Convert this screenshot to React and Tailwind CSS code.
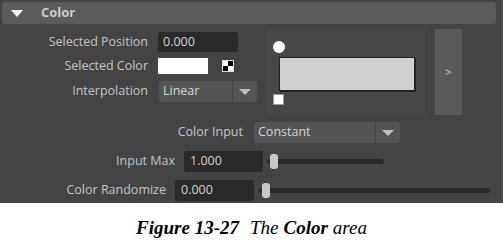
import React from 'react';

const labelCls = 'text-[12.5px] text-[#c6c6c6] text-right whitespace-nowrap';

const Field = ({ value, width }) => (
    <div className={`${width} h-[21px] bg-[#2a2a2a] rounded-[2px] flex items-center pl-[6px] text-[12.5px] text-[#d2d2d2]`}>
        {value}
    </div>
);

const Dropdown = ({ value, width }) => (
    <div className="flex h-[21px]">
        <div className={`${width} bg-[#545454] rounded-l-[2px] flex items-center pl-[4px] text-[12.5px] text-[#d6d6d6]`}>{value}</div>
        <div className="w-[24px] ml-[1px] bg-[#545454] rounded-r-[2px] flex items-center justify-center">
            <div className="w-0 h-0 border-l-[6px] border-r-[6px] border-t-[6px] border-l-transparent border-r-transparent border-t-[#bdbdbd]" />
        </div>
    </div>
);

const Slider = ({ width }) => (
    <div className={`${width} relative h-[17px] flex items-center`}>
        <div className="w-full h-[5px] bg-[#2b2b2b] rounded-full" />
        <div className="absolute left-[3px] top-[1px] w-[8px] h-[15px] bg-[#c8c8c8] rounded-[3px]" />
    </div>
);

export default function App() {
    return (
        <div className="w-[503px] h-[244px] bg-white" style={{ fontFamily: '"Open Sans", "Liberation Sans", sans-serif' }}>
            <div className="h-[203px] bg-[#444444] pt-[2px] pl-[2px] pr-[6px] border-r border-[#555]">
                {/* section header */}
                <div className="h-[22px] bg-[#5b5b5b] rounded-[3px] flex items-center">
                    <div className="ml-[9px] w-0 h-0 border-l-[6px] border-r-[6px] border-t-[7px] border-l-transparent border-r-transparent border-t-white" />
                    <span className="ml-[18px] text-[13px] font-bold text-[#c9cdd2]">Color</span>
                </div>

                {/* top block */}
                <div className="flex mt-[5px] h-[86px]">
                    <div className="flex flex-col pt-[3px]">
                        <div className="flex items-center h-[20px]">
                            <div className={`${labelCls} w-[146px]`}>Selected Position</div>
                            <div className="ml-[10px] w-[80px] h-[20px] bg-[#2a2a2a] rounded-[2px] flex items-center pl-[5px] text-[12.5px] text-[#d2d2d2]">0.000</div>
                        </div>
                        <div className="flex items-center h-[16px] mt-[6px]">
                            <div className={`${labelCls} w-[146px]`}>Selected Color</div>
                            <div className="ml-[10px] w-[50px] h-[16px] bg-white" />
                            <div className="ml-[14px] grid grid-cols-2 w-[12px] h-[12px] border border-[#ddd]">
                                <div className="bg-white" />
                                <div className="bg-black" />
                                <div className="bg-black" />
                                <div className="bg-white" />
                            </div>
                        </div>
                        <div className="flex items-center h-[21px] mt-[7px]">
                            <div className={`${labelCls} w-[146px]`}>Interpolation</div>
                            <div className="ml-[11px]">
                                <Dropdown value="Linear" width="w-[73px]" />
                            </div>
                        </div>
                    </div>

                    {/* ramp */}
                    <div className="ml-[10px] w-[158px] h-[86px] bg-[#474747] flex flex-col pl-[6px] pt-[12px]">
                        <div className="w-[12px] h-[12px] rounded-full bg-white" />
                        <div className="ml-[6px] mt-[4px] w-[136px] h-[34px] bg-[#d0d0d0] border border-[#222] shadow-[1px_1px_0_#222]" />
                        <div className="mt-[3px] w-[11px] h-[11px] bg-white border border-[#999]" />
                    </div>

                    <div className="ml-[10px] w-[27px] h-[86px] bg-[#5a5a5a] flex items-center justify-center text-[11px] text-[#cfd6e0]">&gt;</div>
                </div>

                {/* bottom rows */}
                <div className="flex items-center mt-[7px] h-[21px]">
                    <div className={`${labelCls} w-[241px]`}>Color Input</div>
                    <div className="ml-[11px]">
                        <Dropdown value="Constant" width="w-[121px]" />
                    </div>
                </div>
                <div className="flex items-center mt-[8px] h-[21px]">
                    <div className={`${labelCls} w-[173px]`}>Input Max</div>
                    <div className="ml-[9px]">
                        <Field value="1.000" width="w-[79px]" />
                    </div>
                    <div className="ml-[4px]">
                        <Slider width="w-[117px]" />
                    </div>
                </div>
                <div className="flex items-center mt-[8px] h-[21px]">
                    <div className={`${labelCls} w-[164px]`}>Color Randomize</div>
                    <div className="ml-[9px]">
                        <Field value="0.000" width="w-[79px]" />
                    </div>
                    <div className="ml-[5px]">
                        <Slider width="w-[231px]" />
                    </div>
                </div>
            </div>

            {/* caption */}
            <div className="h-[41px] flex items-center justify-center pt-[10px] text-[19px] text-black" style={{ fontFamily: '"Liberation Serif", serif' }}>
                <span className="italic font-bold">Figure 13-27</span>
                <span className="italic ml-[11px]">The</span>
                <span className="italic font-bold ml-[5px]">Color</span>
                <span className="italic ml-[5px]">area</span>
            </div>
        </div>
    );
}
